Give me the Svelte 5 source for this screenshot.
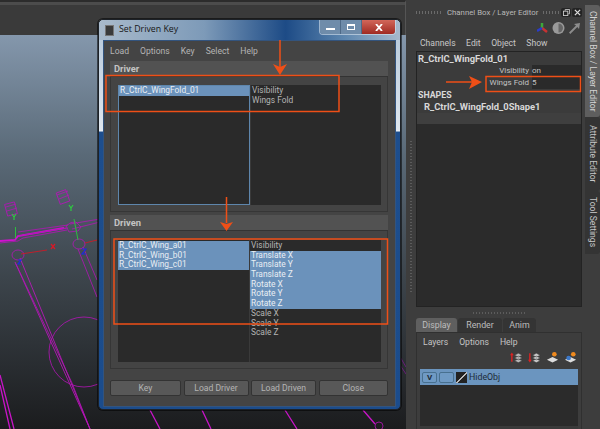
<script>
	const driverAttrs = ['Visibility', 'Wings Fold'];
	const drivenObjs = ['R_CtrlC_Wing_a01', 'R_CtrlC_Wing_b01', 'R_CtrlC_Wing_c01'];
	const drivenAttrs = [
		['Visibility', false],
		['Translate X', true],
		['Translate Y', true],
		['Translate Z', true],
		['Rotate X', true],
		['Rotate Y', true],
		['Rotate Z', true],
		['Scale X', false],
		['Scale Y', false],
		['Scale Z', false]
	];
	const menus = ['Load', 'Options', 'Key', 'Select', 'Help'];
	const buttons = ['Key', 'Load Driver', 'Load Driven', 'Close'];
</script>

<div class="screen">
	<div class="left">
		<div class="topbar"></div>
		<div class="viewport">
			<svg class="wire" width="406" height="394" viewBox="0 35 406 394" fill="none">
				<g stroke="#b414b8" stroke-width="0.8">
					<rect x="6" y="203" width="10" height="12" transform="rotate(-15 11 209)" />
					<path d="M6 207l10-3M7 211l10-3" />
					<rect x="58" y="191" width="10" height="12" transform="rotate(-20 63 197)" />
					<path d="M57 195l11-4M59 199l10-4" />
					<path d="M0 241l15-1 3-4 46-8" stroke="#d010d0" stroke-width="1.8" />
					<path d="M70 224l30-5M72 229l28-7" />
					<path d="M0 243l18-2 5-3 44-8M18 232l50-7M24 235l44-7M18 236l48-8" />
					<ellipse cx="18" cy="255" rx="6" ry="5" />
					<ellipse cx="79" cy="244" rx="6" ry="5" />
					<path d="M66 226q5-5 10-4l5 5-3 4-9 1z" />
					<path d="M15 262l75 167M20 258l70 171" stroke="#c814c8" />
					<path d="M16 264l56 119 18 46" />
					<path d="M78 249l19 48M83 247l14 33" />
					<circle cx="84" cy="352" r="35" />
					<path d="M0 375l14 54M0 385l10 44" stroke="#c814c8" stroke-width="1.3" />
					<path d="M150 410l10 19M202 410l9 19M285 410l12 19M363 410l12 14" stroke="#c814c8" stroke-width="1.3" />
					<circle cx="379" cy="426" r="4" />
					<path d="M399 355l7 12M400 365l6 9" stroke="#7a1a8a" />
				</g>
				<path d="M21 254l26-4M85 243l12-3" stroke="#cc1a26" stroke-width="0.9" />
				<path d="M15.500 227v11M74 219l4 21" stroke="#2ebc40" stroke-width="1" />
				<path d="M51 244l4 5M55 244l-4 5" stroke="#d61a28" stroke-width="1.300" />
				<path d="M12 214l2 3 2-3M14 217v3M69 205l2 3 2-3M71 208v3" stroke="#2ecc40" stroke-width="1.200" />
				<path d="M18 260l3 0-3 4 3 0M82 249l4 0-4 5 4 0" stroke="#1a2ae0" stroke-width="1.200" />
			</svg>
		</div>
	</div>

	<aside class="sidebar">
		<div class="splitter"></div>
		<div class="dock">
			<div class="dock-title">
				<span class="grip"></span>
				<span>Channel Box / Layer Editor</span>
				<span class="grip short"></span>
				<span class="dock-btn">
					<svg width="7" height="7" viewBox="0 0 8 8" fill="none" stroke="#ccc"><rect x=".5" y="2.500" width="5" height="5" /><path d="M2.500 2V.5h5v5H6" /></svg>
				</span>
				<span class="dock-btn">
					<svg width="7" height="7" viewBox="0 0 8 8" stroke="#ddd" stroke-width="1.500"><path d="M1 1l6 6M7 1L1 7" /></svg>
				</span>
			</div>
			<div class="tools">
				<svg width="11" height="14" viewBox="0 0 11 14">
					<path d="M5 7V2" stroke="#3ca83c" stroke-width="2.500" />
					<path d="M5 7l5 4" stroke="#c83232" stroke-width="2.500" />
					<path d="M5 7L0 10" stroke="#2a3cc8" stroke-width="2.500" />
				</svg>
				<svg width="13" height="14" viewBox="0 0 13 14">
					<circle cx="6.500" cy="7" r="6" fill="#9a9a9a" />
					<path d="M6.500 2.500a4.500 4.500 0 0 1 0 9z" fill="#666" />
				</svg>
				<svg width="12" height="14" viewBox="0 0 12 14" fill="#8c8c8c">
					<path d="M0 11.500l7-7-2-1.500 6-1-1 6-1.700-2-7 7z" />
				</svg>
			</div>
			<div class="menu channel-menu">
				<span>Channels</span><span>Edit</span><span>Object</span><span>Show</span>
			</div>
			<div class="channel-box">
				<div class="obj-name">R_CtrlC_WingFold_01</div>
				<div class="attr"><span class="attr-label">Visibility</span><span class="attr-val">on</span></div>
				<div class="attr"><span class="attr-label">Wings Fold</span><span class="attr-val">5</span></div>
				<div class="shapes">SHAPES</div>
				<div class="shape-name">R_CtrlC_WingFold_0Shape1</div>
				<div class="shape-fill"></div>
			</div>
			<div class="sash"><span class="sash-dots"></span></div>
			<div class="layer-tabs">
				<span class="layer-tab active">Display</span>
				<span class="layer-tab">Render</span>
				<span class="layer-tab">Anim</span>
			</div>
			<div class="layer-panel">
				<div class="menu layer-menu">
					<span>Layers</span><span>Options</span><span>Help</span>
				</div>
				<div class="layer-tools">
					<svg width="13" height="13" viewBox="0 0 14 13">
						<path d="M2 11V3" stroke="#d22" stroke-width="1.500" />
						<path d="M0 4l2-3 2 3z" fill="#d22" />
						<path d="M5 4l4-2 4 2-4 2zM5 7l4-2 4 2-4 2zM5 10l4-2 4 2-4 2z" fill="#bbb" stroke="#444" stroke-width=".5" />
					</svg>
					<svg width="13" height="13" viewBox="0 0 14 13">
						<path d="M2 2v8" stroke="#d22" stroke-width="1.500" />
						<path d="M0 9l2 3 2-3z" fill="#d22" />
						<path d="M5 4l4-2 4 2-4 2zM5 7l4-2 4 2-4 2zM5 10l4-2 4 2-4 2z" fill="#ccc" stroke="#444" stroke-width=".5" />
					</svg>
					<svg width="13" height="13" viewBox="0 0 14 13">
						<circle cx="9" cy="3" r="2.500" fill="#f08a1e" />
						<path d="M1 9l6-3 6 3-6 3z" fill="#ddd" />
					</svg>
					<svg width="13" height="13" viewBox="0 0 14 13">
						<circle cx="10" cy="3" r="2.500" fill="#f08a1e" />
						<path d="M1 9l6-3 6 3-6 3z" fill="#ddd" />
						<circle cx="5" cy="7" r="2.500" fill="#3c78c8" />
					</svg>
				</div>
				<div class="layer-list">
					<div class="layer-row">
						<span class="layer-v">V</span>
						<span class="layer-v"></span>
						<span class="layer-swatch"></span>
						<span>HideObj</span>
					</div>
				</div>
				<div class="layer-scroll"></div>
			</div>
		</div>
		<div class="side-tabs">
			<span class="side-tab first">Channel Box / Layer Editor</span>
			<span class="side-tab second">Attribute Editor</span>
			<span class="side-tab third">Tool Settings</span>
		</div>
	</aside>

	<section class="window">
		<div class="titlebar">
			<span class="app-icon"></span>
			<span class="title">Set Driven Key</span>
			<div class="win-btns">
				<span class="win-btn"><i class="min"></i></span>
				<span class="win-btn"><i class="max"></i></span>
				<span class="win-btn close">
					<svg width="8" height="7" viewBox="0 0 8 7" stroke="#fff" stroke-width="1.800"><path d="M1 0l6 7M7 0L1 7" /></svg>
				</span>
			</div>
		</div>
		<div class="client">
			<div class="menu win-menu">
				{#each menus as m}<span>{m}</span>{/each}
			</div>
			<div class="frame-head">Driver</div>
			<div class="frame driver">
				<div class="list-pair">
					<div class="list objs focused">
						<div class="item sel">R_CtrlC_WingFold_01</div>
					</div>
					<div class="list attrs">
						{#each driverAttrs as a}<div class="item">{a}</div>{/each}
					</div>
				</div>
			</div>
			<div class="frame-head">Driven</div>
			<div class="frame driven">
				<div class="list-pair">
					<div class="list objs">
						{#each drivenObjs as o}<div class="item sel">{o}</div>{/each}
					</div>
					<div class="list attrs">
						{#each drivenAttrs as [a, on]}<div class="item" class:sel={on}>{a}</div>{/each}
					</div>
				</div>
			</div>
			<div class="actions">
				{#each buttons as b}<span class="btn">{b}</span>{/each}
			</div>
		</div>
	</section>

	<svg class="notes" width="600" height="429" viewBox="0 0 600 429" fill="none">
		<g stroke="#ef4f17" stroke-width="1.500">
			<rect x="106" y="75.500" width="233" height="36" />
			<rect x="114" y="239" width="273.500" height="85" />
			<rect x="486" y="76.500" width="94.500" height="15" />
			<path d="M280 40v28M226.500 197v26M446 82h26" />
		</g>
		<g fill="#ef4f17">
			<path d="M273 64l7 3 7-3-7 11z" />
			<path d="M220 222l6.500 2 6.500-2-6.500 9z" />
			<path d="M469 76l3 6-3 7 13-7z" />
		</g>
	</svg>
</div>

<style>
	:global(body) {
		margin: 0;
		background: #3b3b3b;
	}

	.screen {
		position: relative;
		display: flex;
		width: 600px;
		height: 429px;
		overflow: hidden;
		background: #3d3d3d;
		color: #c4c4c4;
		font-family: Roboto, 'Liberation Sans', sans-serif;
		font-size: 8.600px;
	}

	.left {
		display: flex;
		flex-direction: column;
		width: 406px;
	}
	.topbar {
		height: 35px;
		box-sizing: border-box;
		background: #3a3a3a;
		border-top: 2px solid #2c2c2c;
		border-right: 1px solid #555;
		box-shadow: inset 0 3px 0 #4c4c4c;
	}
	.viewport {
		flex: 1;
		background: linear-gradient(#8497ac 0%, #5a6a78 30%, #3c444b 62%, #1b1c1e 100%);
	}
	.wire {
		display: block;
	}

	.sidebar {
		display: flex;
		flex: 1;
		min-width: 0;
	}
	.splitter {
		width: 10px;
		flex: none;
		box-sizing: border-box;
		margin: 141px 0 136px;
		background: repeating-linear-gradient(#5c5c5c 0 1px, transparent 1px 3px) 4px 0 / 2px 100% no-repeat;
	}
	.dock {
		display: flex;
		flex-direction: column;
		flex: 1;
		min-width: 0;
		padding-right: 3px;
	}
	.dock-title {
		display: flex;
		align-items: center;
		gap: 5px;
		height: 18px;
		margin-top: 3px;
		color: #b8b8b8;
		font-size: 7.800px;
		white-space: nowrap;
	}
	.grip {
		width: 26px;
		height: 3px;
		background: repeating-linear-gradient(90deg, #6a6a6a 0 1px, transparent 1px 3px);
	}
	.grip.short {
		flex: 1;
		min-width: 0;
	}
	.dock-btn {
		display: flex;
		align-items: center;
		justify-content: center;
		width: 10px;
		height: 9px;
		margin-left: -4px;
		background: #242424;
		border-radius: 2px;
	}
	.tools {
		display: flex;
		justify-content: flex-end;
		gap: 4px;
		height: 14px;
		padding-right: 1px;
	}
	.menu {
		display: flex;
		font-size: 8.600px;
		white-space: nowrap;
	}
	.channel-menu {
		gap: 10.500px;
		height: 16px;
		align-items: center;
		padding-left: 4px;
		color: #c8c8c8;
	}
	.channel-box {
		display: flex;
		flex-direction: column;
		flex: none;
		height: 256px;
		box-sizing: border-box;
		background: #2b2b2b;
		border: 1px solid #232323;
		font-size: 8px;
	}
	.obj-name {
		height: 13px;
		line-height: 13px;
		padding-left: 1px;
		background: #3b3b3b;
		color: #d8d8d8;
		font-size: 9.400px;
		font-weight: 700;
	}
	.attr {
		display: flex;
		height: 12px;
		line-height: 12px;
		background: #3b3b3b;
	}
	.attr-label {
		width: 115px;
		text-align: right;
		padding-right: 3px;
		box-sizing: border-box;
	}
	.attr-val {
		flex: 1;
		background: #2a2a2a;
	}
	.shapes {
		height: 12px;
		line-height: 12px;
		padding-left: 1px;
		background: #3b3b3b;
		color: #d8d8d8;
		font-size: 8.800px;
		font-weight: 700;
	}
	.shape-name {
		height: 12px;
		line-height: 12px;
		padding-left: 7px;
		background: #3b3b3b;
		color: #d8d8d8;
		font-size: 9.400px;
		font-weight: 700;
	}
	.shape-fill {
		height: 11px;
		background: #3f3f3f;
	}
	.sash {
		display: flex;
		justify-content: center;
		align-items: center;
		height: 11px;
		flex: none;
	}
	.sash-dots {
		width: 53px;
		height: 2px;
		background: repeating-linear-gradient(90deg, #5c5c5c 0 1px, transparent 1px 3px);
	}
	.layer-tabs {
		display: flex;
		gap: 1px;
		height: 14px;
		flex: none;
	}
	.layer-tab {
		display: flex;
		align-items: center;
		justify-content: center;
		width: 44px;
		background: #343434;
		border-radius: 3px 3px 0 0;
		font-size: 8.800px;
		color: #bdbdbd;
	}
	.layer-tab:last-child {
		width: 33px;
	}
	.layer-tab.active {
		width: 41px;
		background: #5f5f5f;
	}
	.layer-panel {
		flex: 1;
		display: flex;
		flex-direction: column;
		padding: 0 3px 0 3px;
		background: #3d3d3d;
		border: 1px solid #303030;
		border-bottom: 0;
	}
	.layer-menu {
		gap: 11px;
		height: 17px;
		align-items: center;
		padding-left: 3px;
	}
	.layer-tools {
		display: flex;
		justify-content: flex-end;
		gap: 5px;
		height: 15px;
		margin-bottom: 4px;
		align-items: center;
		padding-right: 1px;
	}
	.layer-list {
		flex: 1;
		background: #2b2b2b;
	}
	.layer-row {
		display: flex;
		align-items: center;
		gap: 2px;
		height: 16px;
		padding-left: 2px;
		background: #6b95bf;
		color: #1d2a38;
		font-size: 8.800px;
	}
	.layer-v {
		width: 13px;
		height: 9px;
		line-height: 9px;
		text-align: center;
		border: 1px solid #48708f;
		border-radius: 2px;
		background: #6f9ac4;
		font-weight: 700;
		font-size: 8px;
	}
	.layer-swatch {
		width: 11px;
		height: 11px;
		background: linear-gradient(135deg, #222 47%, #bbb 47% 55%, #222 55%);
	}
	.layer-scroll {
		height: 3px;
		background: #3a3a3a;
	}

	.side-tabs {
		display: flex;
		flex-direction: column;
		width: 15px;
		padding-top: 5px;
	}
	.side-tab {
		display: block;
		writing-mode: vertical-rl;
		text-align: center;
		width: 15px;
		font-size: 8.600px;
		line-height: 15px;
		white-space: nowrap;
		background: #343434;
		border-radius: 0 3px 3px 0;
		color: #c6c6c6;
	}
	.side-tab.first {
		height: 112px;
		background: #5e5e5e;
		color: #d4d4d4;
	}
	.side-tab.second {
		height: 74px;
	}
	.side-tab.third {
		height: 63px;
	}

	.window {
		position: absolute;
		left: 98px;
		top: 19px;
		width: 303px;
		height: 391px;
		box-sizing: border-box;
		display: flex;
		flex-direction: column;
		padding: 0 4px 2px 4px;
		border: 1px solid #1d2228;
		border-radius: 5px;
		background: linear-gradient(#b4c6d8 0, #dfe7ef 110px, #f2f5f8 111px, #1d4e8e 112px, #1b4c8c 100%);
		box-shadow: 0 0 0 1px #0008;
	}
	.titlebar {
		display: flex;
		align-items: flex-start;
		flex: none;
		height: 20px;
		margin: 0 -4px;
		padding: 0 4px 0 5px;
		background: linear-gradient(90deg, #a9bacb 0%, #7d9ab8 35%, #1d4b86 62%, #5f88b0 82%, #a7b9cc 100%);
		border-radius: 5px 5px 0 0;
	}
	.app-icon {
		width: 9px;
		height: 11px;
		margin: 5px 5px 0 1px;
		background: #3a3a3a;
		border: 1px solid #777;
		box-sizing: border-box;
	}
	.title {
		margin-top: 3px;
		font-family: 'Open Sans', 'Liberation Sans', sans-serif;
		font-size: 8.800px;
		color: #161616;
		white-space: nowrap;
	}
	.win-btns {
		display: flex;
		margin-left: auto;
		height: 14px;
		border: 1px solid #dbe4ee99;
		border-top: 0;
		border-radius: 0 0 4px 4px;
		overflow: hidden;
	}
	.win-btn {
		display: flex;
		align-items: center;
		justify-content: center;
		box-sizing: border-box;
		width: 21px;
		background: #6f8caa;
		border-right: 1px solid #4e6a88;
	}
	.win-btn.close {
		width: 33px;
		border-right: 0;
		background: linear-gradient(#d2675a, #a02a22);
	}
	.min {
		width: 9px;
		height: 2px;
		margin-top: 4px;
		background: #fff;
	}
	.max {
		width: 6px;
		height: 3px;
		border: 1px solid #fff;
		border-top-width: 2px;
	}

	.client {
		flex: 1;
		display: flex;
		flex-direction: column;
		padding: 0 7px 10px 6px;
		background: #444;
		border: 1px solid #33547e;
		min-height: 0;
	}
	.win-menu {
		align-items: center;
		flex: none;
		gap: 11px;
		height: 20px;
		color: #b4b4b4;
	}
	.frame-head {
		flex: none;
		height: 15px;
		line-height: 15px;
		padding-left: 4px;
		background: #525252;
		color: #c4c4c4;
		font-weight: 700;
		font-size: 9.400px;
		border-bottom: 1px solid #333;
	}
	.frame {
		display: flex;
		flex: none;
		box-sizing: border-box;
		padding: 8px 6px 6px 7px;
		border: 1px solid #363636;
		border-top: 0;
		margin-bottom: 3px;
	}
	.frame.driver {
		height: 135px;
	}
	.frame.driven {
		height: 138px;
		padding-top: 9px;
		margin-bottom: 11px;
	}
	.list-pair {
		flex: 1;
		display: flex;
		gap: 1px;
		background: #3a3a3a;
	}
	.list {
		flex: 1;
		min-width: 0;
		background: #2a2a2a;
		box-sizing: border-box;
		padding-top: 1px;
		font-size: 8.400px;
		line-height: 9.700px;
		white-space: nowrap;
	}
	.list.objs.focused {
		border: 1px solid #5e86ac;
		padding-top: 0;
	}
	.list.attrs {
		color: #b4b4b4;
	}
	.item {
		height: 9.700px;
		padding-left: 1px;
	}
	.item.sel {
		background: #6b92bb;
		color: #e9eef3;
	}
	.actions {
		display: grid;
		grid-template-columns: 71px 65px 65px 1fr;
		gap: 2.500px;
	}
	.btn {
		box-sizing: border-box;
		height: 16px;
		line-height: 14px;
		text-align: center;
		background: #585858;
		border: 1px solid #333;
		border-radius: 2px;
		color: #b4b4b4;
		font-size: 8.600px;
	}

	.notes {
		position: absolute;
		left: 0;
		top: 0;
		pointer-events: none;
	}
</style>
